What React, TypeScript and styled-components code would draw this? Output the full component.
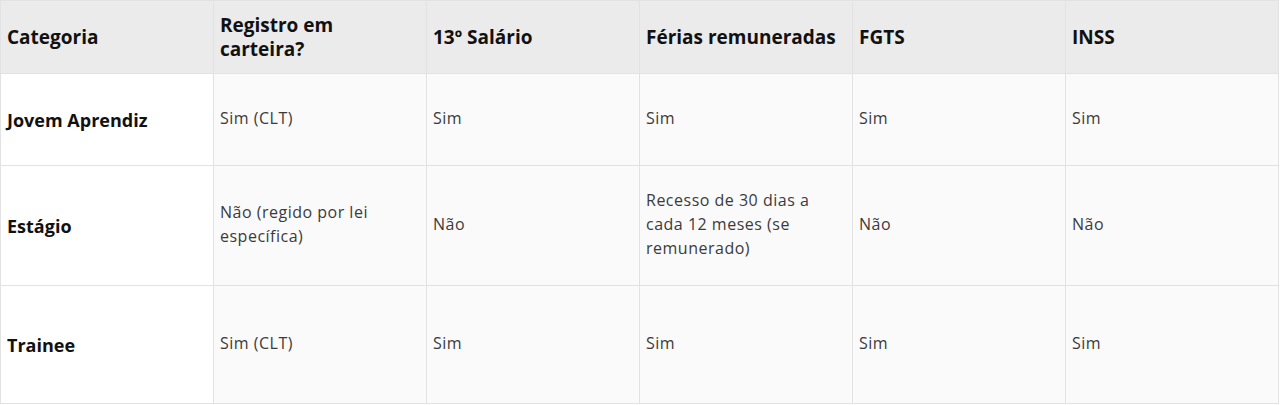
import React from 'react';
import styled, { createGlobalStyle } from 'styled-components';

const GlobalStyle = createGlobalStyle`
  body {
    margin: 0;
    background: #ffffff;
    font-family: 'Open Sans', 'Noto Sans', sans-serif;
    color: #222;
  }
`;

const Table = styled.table`
  width: 1279px;
  border-collapse: collapse;
  table-layout: fixed;
`;

const HeadRow = styled.tr`
  height: 73px;
`;

const HeadCell = styled.th`
  background-color: #ebebeb;
  border: 1px solid #e2e2e2;
  padding: 0 6px;
  text-align: left;
  vertical-align: middle;
  font-size: 19px;
  font-weight: 700;
  line-height: 24px;
  color: #111;
`;

const Row = styled.tr<{ $height: number }>`
  height: ${p => p.$height}px;
`;

const Cell = styled.td<{ $lead?: boolean }>`
  background-color: ${p => (p.$lead ? '#ffffff' : '#fafafa')};
  border: 1px solid #e2e2e2;
  padding: ${p => (p.$lead ? '0 6px' : '0 6px 4px')};
  vertical-align: middle;
  font-size: ${p => (p.$lead ? '18px' : '16px')};
  font-weight: ${p => (p.$lead ? 700 : 400)};
  letter-spacing: ${p => (p.$lead ? '0' : '0.5px')};
  line-height: 24px;
  color: ${p => (p.$lead ? '#111' : '#3a3a3a')};
`;

const headers = [
  'Categoria',
  'Registro em carteira?',
  '13º Salário',
  'Férias remuneradas',
  'FGTS',
  'INSS',
];

const rows = [
  { height: 92, cells: ['Jovem Aprendiz', 'Sim (CLT)', 'Sim', 'Sim', 'Sim', 'Sim'] },
  {
    height: 120,
    cells: [
      'Estágio',
      'Não (regido por lei específica)',
      'Não',
      'Recesso de 30 dias a cada 12 meses (se remunerado)',
      'Não',
      'Não',
    ],
  },
  { height: 118, cells: ['Trainee', 'Sim (CLT)', 'Sim', 'Sim', 'Sim', 'Sim'] },
];

const App: React.FC = () => (
  <>
    <GlobalStyle />
    <Table>
      <thead>
        <HeadRow>
          {headers.map(h => (
            <HeadCell key={h}>{h}</HeadCell>
          ))}
        </HeadRow>
      </thead>
      <tbody>
        {rows.map(row => (
          <Row key={row.cells[0]} $height={row.height}>
            {row.cells.map((c, i) => (
              <Cell key={`${row.cells[0]}-${i}`} $lead={i === 0}>
                {c}
              </Cell>
            ))}
          </Row>
        ))}
      </tbody>
    </Table>
  </>
);

export default App;
